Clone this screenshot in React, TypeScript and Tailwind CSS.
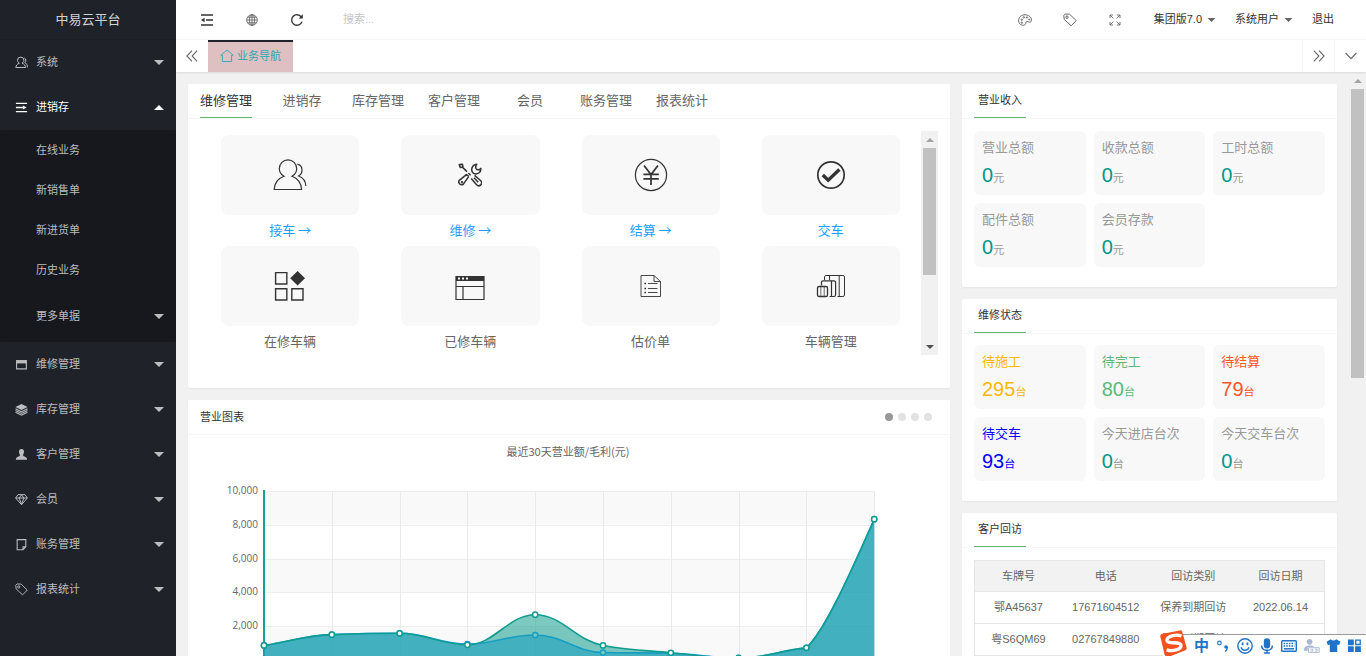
import React, { ReactNode, useState } from 'react';
import clsx from 'clsx';

interface IconProps {
  className?: string;
}

// ---------- Icons ----------

const UsersIcon: React.FC<IconProps> = ({ className }) => (
  <svg viewBox="0 0 34 32" className={className} fill="none" stroke="currentColor" strokeWidth="1.2">
    <path d="M11 17.3C4.5 19.6 1.6 24 1.2 30.5H28.6C28.2 24 25.3 19.6 19 17.3C22 15.6 23.7 12.6 23.7 9.6A8.7 8.7 0 0 0 6.3 9.6C6.3 12.6 8 15.6 11 17.3Z" />
    <path d="M24.4 5.2C27.3 5.8 29 8.2 29 11.2C29 13.8 27.8 15.7 25.6 17C29.8 18.6 32.7 22.2 32.8 27" />
  </svg>
);

const SmallUsersIcon: React.FC<IconProps> = ({ className }) => (
  <svg viewBox="0 0 13 13" className={className} fill="none" stroke="currentColor" strokeWidth="1">
    <path d="M4.4 7.2C2 8 1 9.6.8 11.5H10.6C10.4 9.6 9.4 8 7 7.2C8.4 6.4 8.9 5.4 8.9 4.3A3.2 3.2 0 0 0 2.5 4.3C2.5 5.4 3 6.4 4.4 7.2Z" />
    <path d="M9.4 2C11 2.4 11.4 5.6 9.8 6.6C11.6 7.4 12.4 9 12.4 11.4" />
  </svg>
);

const ToolsIcon: React.FC<IconProps> = ({ className }) => (
  <svg viewBox="0 0 24 24" className={className} fill="none" stroke="currentColor" strokeWidth="1.5" strokeLinejoin="round">
    <path d="M1.2 1.6L4.4 1.2L5 4L2.4 4.6ZM4.6 4.4L9 8.6" />
    <path d="M10.8 13.4L5.2 21.4A3 3 0 0 1 1 17.6L8.4 11.6L10.6 13.2" />
    <path d="M18.8 1.2C17.6 3 17.4 5.2 18.8 6.4C20.2 7.2 21.8 6.6 22.8 5.4C23.4 9.4 19.2 12 15.6 10.4C12.2 8 13.6 1.6 18.8 1.2Z" />
    <path d="M10.4 10L12.6 12.2M13.2 15.6L18.6 21.8A2.9 2.9 0 0 0 22.8 17.8L16.6 12.4M16 14.8L20.2 19.2" />
    <circle cx="4" cy="19.2" r=".5" />
  </svg>
);

const YenIcon: React.FC<IconProps> = ({ className }) => (
  <svg viewBox="0 0 34 34" className={className} fill="none" stroke="currentColor">
    <circle cx="17" cy="17" r="15.6" strokeWidth="1.2" />
    <path d="M10 7.5L17 16.5L24 7.5M17 16.5V27M9.4 16.3H24.8M9.4 20.8H24.8" strokeWidth="1.7" />
  </svg>
);

const CheckIcon: React.FC<IconProps> = ({ className }) => (
  <svg viewBox="0 0 30 30" className={className} fill="none" stroke="currentColor">
    <circle cx="15" cy="15" r="13.2" strokeWidth="1.7" />
    <path d="M6.8 15L12.2 20.2L23.4 9.6" strokeWidth="3.4" />
  </svg>
);

const AppsIcon: React.FC<IconProps> = ({ className }) => (
  <svg viewBox="0 0 32 32" className={className} fill="none" stroke="currentColor" strokeWidth="1.4">
    <path d="M1.6 2.6H12.8V14H1.6ZM1.6 18.8H12.8V30H1.6ZM17.8 18.8H29V30H17.8Z" />
    <path d="M23.6 1L31 8.3L23.6 15.6L16.2 8.3Z" fill="currentColor" stroke="none" />
  </svg>
);

const WindowIcon: React.FC<IconProps> = ({ className }) => (
  <svg viewBox="0 0 30 26" className={className} fill="none" stroke="currentColor" strokeWidth="1.2">
    <path d="M1 1.5H29V24.5H1ZM1 11.5H29M8 11.5V24.5" />
    <path d="M1 1H29V6H1Z" fill="currentColor" stroke="none" />
    <path d="M3 3.5H5M7 3.5H9M11 3.5H13" stroke="#fff" strokeWidth="2" />
  </svg>
);

const FormIcon: React.FC<IconProps> = ({ className }) => (
  <svg viewBox="0 0 22 24" className={className} fill="none" stroke="currentColor" strokeWidth=".9">
    <path d="M1 1.5H14L20.5 7.5V22.5H1ZM14 1.5V7.5H20.5M8 9.5H17.5M8 14.5H17.5M8 18.5H17.5" />
    <path d="M4.4 9.5H6M4.4 14.5H6M4.4 18.5H6" strokeWidth="1.6" />
  </svg>
);

const FleetIcon: React.FC<IconProps> = ({ className }) => (
  <svg viewBox="0 0 30 24" className={className} fill="none" stroke="currentColor" strokeWidth="1">
    <rect x="1.5" y="12.5" width="10" height="10" rx="1.6" strokeWidth="1.3" />
    <path d="M4.8 12.5V22.5M8.2 12.5V22.5" strokeWidth=".7" />
    <path d="M5.5 11.5V8.4A1.6 1.6 0 0 1 7.1 6.8H18A1.6 1.6 0 0 1 19.6 8.4V21A1.6 1.6 0 0 1 18 22.5H13.5M15.5 7V22.5" strokeWidth="1.2" />
    <path d="M8.5 6V2.8A1.6 1.6 0 0 1 10.1 1.5H26.9A1.6 1.6 0 0 1 28.5 2.8V21A1.6 1.6 0 0 1 26.9 22.5H21.5M13.5 1.5V6M23.2 1.5V22.5" />
  </svg>
);

const MenuLinesIcon: React.FC<IconProps> = ({ className }) => (
  <svg viewBox="0 0 14 12" className={className} fill="none" stroke="currentColor" strokeWidth="1.4">
    <path d="M1 1.5H13M1 6H8.5M1 10.5H13" />
    <path d="M8.5 3.8L12.5 6L8.5 8.2Z" fill="currentColor" stroke="none" />
  </svg>
);

const ShrinkIcon: React.FC<IconProps> = ({ className }) => (
  <svg viewBox="0 0 14 12" className={className} fill="none" stroke="currentColor" strokeWidth="1.3">
    <path d="M1 1H13M6 6H13M1 11H13" />
    <path d="M4.6 3.8L1 6L4.6 8.2Z" fill="currentColor" stroke="none" />
  </svg>
);

const GlobeIcon: React.FC<IconProps> = ({ className }) => (
  <svg viewBox="0 0 12 12" className={className} fill="none" stroke="currentColor" strokeWidth=".8">
    <circle cx="6" cy="6" r="5.3" />
    <ellipse cx="6" cy="6" rx="2.6" ry="5.3" />
    <path d="M6 .7V11.3M.7 6H11.3M1.5 3.2H10.5M1.5 8.8H10.5" />
  </svg>
);

const RefreshIcon: React.FC<IconProps> = ({ className }) => (
  <svg viewBox="0 0 14 14" className={className} fill="none" stroke="currentColor" strokeWidth="1.4">
    <path d="M12 8.6A5.3 5.3 0 1 1 11.2 3.8" />
    <path d="M12.8 1V5.4H8.8Z" fill="currentColor" stroke="none" />
  </svg>
);

const PaletteIcon: React.FC<IconProps> = ({ className }) => (
  <svg viewBox="0 0 14 12" className={className} fill="none" stroke="currentColor" strokeWidth="1">
    <path d="M4.2 11.2C1.8 10.6.6 8.8.6 6.6C.6 3.2 3.4.8 7 .8C10.6.8 13.4 3 13.4 6C13.4 8.4 11.8 8.6 10.2 7.8C8.4 7 7.6 8 7.8 9.2C8 10.6 6 11.6 4.2 11.2Z" />
    <circle cx="3.7" cy="5.8" r=".7" />
    <circle cx="5.8" cy="3.4" r=".7" />
    <circle cx="9" cy="3.5" r=".7" />
    <circle cx="3.9" cy="8.7" r=".7" />
    <circle cx="11.2" cy="5.5" r=".5" />
  </svg>
);

const TagIcon: React.FC<IconProps> = ({ className }) => (
  <svg viewBox="0 0 14 14" className={className} fill="none" stroke="currentColor" strokeWidth="1" strokeLinejoin="round">
    <path d="M.8 2.4L2.2 1L6.6 1.2L13.2 7.6L8.2 12.8L1.2 6.4Z" />
    <circle cx="4" cy="4.2" r="1.2" />
  </svg>
);

const ExpandIcon: React.FC<IconProps> = ({ className }) => (
  <svg viewBox="0 0 12 12" className={className} fill="none" stroke="currentColor" strokeWidth=".9">
    <path d="M1 4V1H4M1 1L4.4 4.4M8 1H11V4M11 1L7.6 4.4M1 8V11H4M1 11L4.4 7.6M8 11H11V8M11 11L7.6 7.6" />
  </svg>
);

const HomeIcon: React.FC<IconProps> = ({ className }) => (
  <svg viewBox="0 0 14 14" className={className} fill="none" stroke="currentColor" strokeWidth=".9">
    <path d="M.8 6.2L7 1L13.2 6.2H11.6V12.5H2.4V6.2Z" />
  </svg>
);

const ChevronsLeftIcon: React.FC<IconProps> = ({ className }) => (
  <svg viewBox="0 0 12 12" className={className} fill="none" stroke="currentColor" strokeWidth="1.1">
    <path d="M6 .6L.9 6L6 11.4M11.2 .6L6.1 6L11.2 11.4" />
  </svg>
);

const ChevronDownIcon: React.FC<IconProps> = ({ className }) => (
  <svg viewBox="0 0 12 8" className={className} fill="none" stroke="currentColor" strokeWidth="1.1">
    <path d="M.6 1L6 6.6L11.4 1" />
  </svg>
);

const PanelIcon: React.FC<IconProps> = ({ className }) => (
  <svg viewBox="0 0 12 12" className={className} fill="none" stroke="currentColor" strokeWidth="1">
    <path d="M1.5 2.5H10.5V10H1.5Z" />
    <path d="M1 2H11V5H1Z" fill="currentColor" stroke="none" />
  </svg>
);

const LayersIcon: React.FC<IconProps> = ({ className }) => (
  <svg viewBox="0 0 12 12" className={className} fill="none" stroke="currentColor" strokeWidth="1">
    <path d="M6 1L11.6 3.8L6 6.4L.4 3.8Z" fill="currentColor" stroke="none" />
    <path d="M.5 5.4L6 8L11.5 5.4M.5 7L6 9.6L11.5 7M.5 8.6L6 11.2L11.5 8.6" />
  </svg>
);

const PersonIcon: React.FC<IconProps> = ({ className }) => (
  <svg viewBox="0 0 12 12" className={className} fill="currentColor">
    <path d="M6 1C7.7 1 8.4 2.2 8.3 3.8C8.2 5.2 7.6 5.8 7.4 6.8C7.4 8.2 11.2 8 11.2 10.8H.8C.8 8 4.6 8.2 4.6 6.8C4.4 5.8 3.8 5.2 3.7 3.8C3.6 2.2 4.3 1 6 1Z" />
  </svg>
);

const DiamondIcon: React.FC<IconProps> = ({ className }) => (
  <svg viewBox="0 0 12 12" className={className} fill="none" stroke="currentColor" strokeWidth=".9">
    <path d="M2.8 1.5H9.2L11.4 4.6L6 10.8L.6 4.6ZM.6 4.6H11.4M3.8 4.6L6 10.4L8.2 4.6L6 1.8Z" />
  </svg>
);

const NoteIcon: React.FC<IconProps> = ({ className }) => (
  <svg viewBox="0 0 12 12" className={className} fill="none" stroke="currentColor" strokeWidth="1">
    <path d="M2 1.5H10V8L7.4 10.8H2ZM10 8H7.4V10.8" />
  </svg>
);

const Caret: React.FC<IconProps> = ({ className }) => (
  <svg viewBox="0 0 10 5" className={className} fill="currentColor">
    <path d="M0 0H10L5 5Z" />
  </svg>
);

// ---------- Data ----------

const topMenu = [
  { name: '维修管理', icon: PanelIcon },
  { name: '库存管理', icon: LayersIcon },
  { name: '客户管理', icon: PersonIcon },
  { name: '会员', icon: DiamondIcon },
  { name: '账务管理', icon: NoteIcon },
  { name: '报表统计', icon: TagIcon },
];

const subMenu = ['在线业务', '新销售单', '新进货单', '历史业务'];

const navTabs = ['维修管理', '进销存', '库存管理', '客户管理', '会员', '账务管理', '报表统计'];

const shortcuts = [
  { name: '接车 →', icon: UsersIcon, size: 'w-[34px] h-8', link: true },
  { name: '维修 →', icon: ToolsIcon, size: 'size-6', link: true },
  { name: '结算 →', icon: YenIcon, size: 'size-[34px]', link: true },
  { name: '交车', icon: CheckIcon, size: 'size-[30px]', link: true },
  { name: '在修车辆', icon: AppsIcon, size: 'size-8', link: false },
  { name: '已修车辆', icon: WindowIcon, size: 'w-[30px] h-[26px] mt-1', link: false },
  { name: '估价单', icon: FormIcon, size: 'w-[22px] h-6', link: false },
  { name: '车辆管理', icon: FleetIcon, size: 'w-[30px] h-6', link: false },
];

interface Stat {
  label: string;
  value: number;
  unit: string;
  color?: string;
}

const income: Stat[] = [
  { label: '营业总额', value: 0, unit: '元' },
  { label: '收款总额', value: 0, unit: '元' },
  { label: '工时总额', value: 0, unit: '元' },
  { label: '配件总额', value: 0, unit: '元' },
  { label: '会员存款', value: 0, unit: '元' },
];

const repairStatus: Stat[] = [
  { label: '待施工', value: 295, unit: '台', color: 'text-[#ffb800]' },
  { label: '待完工', value: 80, unit: '台', color: 'text-[#5fb878]' },
  { label: '待结算', value: 79, unit: '台', color: 'text-[#ff5722]' },
  { label: '待交车', value: 93, unit: '台', color: 'text-[#0000ff]' },
  { label: '今天进店台次', value: 0, unit: '台' },
  { label: '今天交车台次', value: 0, unit: '台' },
];

const visits = [
  ['鄂A45637', '17671604512', '保养到期回访', '2022.06.14'],
  ['粤S6QM69', '02767849880', '保养到期回访', '2022.06.14'],
];

const turnover = [860, 1500, 1580, 900, 2680, 860, 430, 120, 720, 8330];
const profit = [860, 1500, 1580, 940, 1480, 440, 400, 110, 720, 8330];

// ---------- Sidebar ----------

interface MenuItemProps {
  name: string;
  icon?: React.FC<IconProps>;
  open?: boolean;
  className?: string;
  onClick?: () => void;
}

const MenuItem: React.FC<MenuItemProps> = ({ name, icon: Icon, open, className = 'h-[45px]', onClick }) => (
  <button
    onClick={onClick}
    className={clsx('flex w-full items-center pr-3 pl-[15px] text-left hover:text-white', open && 'text-white', className)}
  >
    <span className="w-[21px] shrink-0">{Icon && <Icon className="size-[13px]" />}</span>
    <span className="flex-1">{name}</span>
    <Caret className={clsx('h-[5px] w-[10px]', open && 'rotate-180')} />
  </button>
);

const Sidebar = () => {
  const [open, setOpen] = useState(true);
  return (
    <aside className="w-44 shrink-0 bg-[#20222a] text-[#bcbdbf]">
      <div className="flex h-10 items-center justify-center border-b border-[#1d1f26] text-[13px] text-[#d2d3d4]">中易云平台</div>
      <nav>
        <MenuItem name="系统" icon={SmallUsersIcon} />
        <MenuItem name="进销存" icon={MenuLinesIcon} open={open} onClick={() => setOpen(!open)} />
        {open && (
          <div className="rounded-xs bg-[#17181d]">
            {subMenu.map(name => (
              <a key={name} href="#" className="flex h-10 items-center pl-9 hover:text-white">{name}</a>
            ))}
            <MenuItem name="更多单据" className="h-[52px]" />
          </div>
        )}
        {topMenu.map(item => (
          <MenuItem key={item.name} name={item.name} icon={item.icon} />
        ))}
      </nav>
    </aside>
  );
};

// ---------- Header ----------

const IconButton: React.FC<{ title: string; className?: string; children: ReactNode }> = ({ title, className, children }) => (
  <button title={title} aria-label={title} className={clsx('flex items-center justify-center', className)}>
    {children}
  </button>
);

const TopBar = () => (
  <header className="flex h-10 items-center border-b border-[#f6f6f6] bg-white pr-8 pl-2 text-[#333]">
    <IconButton title="侧边伸缩" className="h-full w-[45px]"><ShrinkIcon className="h-3 w-3.5" /></IconButton>
    <IconButton title="前台" className="h-full w-[45px]"><GlobeIcon className="size-3 text-[#555]" /></IconButton>
    <IconButton title="刷新" className="h-full w-[45px]"><RefreshIcon className="size-3.5" /></IconButton>
    <input aria-label="搜索" placeholder="搜索..." className="ml-6 w-40 outline-none placeholder:text-[#c4c4c4]" />
    <div className="ml-auto flex h-full items-center text-[#666]">
      <IconButton title="主题" className="h-full w-[45px]"><PaletteIcon className="h-3 w-3.5" /></IconButton>
      <IconButton title="便签" className="h-full w-[45px]"><TagIcon className="size-3.5" /></IconButton>
      <IconButton title="全屏" className="h-full w-[45px]"><ExpandIcon className="size-3" /></IconButton>
    </div>
    <div className="ml-4 flex items-center gap-[19px] text-[#333]">
      <button className="flex items-center gap-[5px]">集团版7.0<Caret className="h-1 w-[9px] text-[#666]" /></button>
      <button className="flex items-center gap-[5px]">系统用户<Caret className="h-1 w-[9px] text-[#666]" /></button>
      <button>退出</button>
    </div>
  </header>
);

const PageTabs = () => (
  <div className="relative flex h-8 bg-white text-[#666] shadow-[0_1px_2px_rgba(0,0,0,0.1)]">
    <IconButton title="向左" className="w-8"><ChevronsLeftIcon className="size-3" /></IconButton>
    <a href="#" className="flex items-center gap-[3px] border-t-2 border-[#20222a] bg-[#dec0c2] px-3 pb-[2px] text-[#2aa9b3]">
      <HomeIcon className="size-3.5" />
      业务导航
    </a>
    <IconButton title="向右" className="ml-auto w-8 border-l border-[#f3f3f3]"><ChevronsLeftIcon className="size-3 rotate-180" /></IconButton>
    <IconButton title="更多" className="w-8 border-l border-[#f3f3f3]"><ChevronDownIcon className="h-2 w-3" /></IconButton>
  </div>
);

// ---------- Shared pieces ----------

const Card: React.FC<{ header: ReactNode; className?: string; children: ReactNode }> = ({ header, className, children }) => (
  <section className="rounded-xs bg-white shadow-[0_1px_2px_rgba(0,0,0,0.05)]">
    <div className="flex h-[35px] border-b border-[#f6f6f6] px-3">{header}</div>
    <div className={className}>{children}</div>
  </section>
);

const CardTitle: React.FC<{ children: ReactNode }> = ({ children }) => (
  <h2 className="flex h-[34px] w-[52px] items-center justify-center border-b border-[#5fb878] text-[#333]">{children}</h2>
);

const ScrollTrack: React.FC<{ thumb: string; className?: string; end?: boolean }> = ({ thumb, className, end }) => (
  <div className={clsx('flex w-[17px] shrink-0 flex-col items-center bg-[#f1f1f1]', className)}>
    <span className="flex h-[17px] shrink-0 items-center"><Caret className="h-1 w-2 rotate-180 text-[#a3a3a3]" /></span>
    <span className={clsx('w-[13px] bg-[#c1c1c1]', thumb)} />
    {end && <span className="mt-auto flex h-[17px] items-center"><Caret className="h-1 w-2 text-[#505050]" /></span>}
  </div>
);

const StatGrid: React.FC<{ stats: Stat[] }> = ({ stats }) => (
  <div className="grid grid-cols-3 gap-2">
    {stats.map(s => (
      <a key={s.label} href="#" className={clsx('block h-16 rounded-md bg-[#f8f8f8] px-2 pt-2', s.color || 'text-[#999]')}>
        <h3 className="text-[13px] leading-[18px]">{s.label}</h3>
        <p className="mt-1 leading-7">
          <span className={clsx('text-[20px]', !s.color && 'text-[#009688]')}>{s.value}</span>
          {s.unit}
        </p>
      </a>
    ))}
  </div>
);

// ---------- Dashboard cards ----------

const ShortcutCard = () => {
  const [active, setActive] = useState(0);
  const tabs = navTabs.map((name, i) => (
    <button
      key={name}
      onClick={() => setActive(i)}
      className={clsx('mr-6 h-[34px] min-w-[52px] text-[13px]', i === active ? 'border-b border-[#5fb878] text-[#333]' : 'text-[#666]')}
    >
      {name}
    </button>
  ));
  return (
    <Card header={tabs} className="px-3 pt-3 pb-[33px]">
      <div className="flex h-56">
        <div className="grid flex-1 grid-cols-4 content-start pt-1">
          {shortcuts.map(({ name, icon: Icon, size, link }) => (
            <a key={name} href="#" className="block px-[21px]">
              <span className="flex h-20 items-center justify-center rounded-lg bg-[#f8f8f8] text-[#333]">
                <Icon className={size} />
              </span>
              <span
                className={clsx(
                  "block h-[31px] text-center font-['Noto_Sans_CJK_SC',sans-serif] text-[13px] leading-[30px]",
                  link ? 'text-[#1e9fff]' : 'text-[#666]'
                )}
              >
                {name}
              </span>
            </a>
          ))}
        </div>
        <ScrollTrack thumb="h-[127px]" end />
      </div>
    </Card>
  );
};

const CHART = { left: 64, top: 56, step: 67.8, height: 169 };

const toPoint = (value: number, i: number) => [CHART.left + i * CHART.step, CHART.top + CHART.height * (1 - value / 10000)];

// Monotone-ish smoothing: tangents go flat at peaks and valleys
const smoothPath = (values: number[]) => {
  const pts = values.map(toPoint);
  const slope = pts.map((p, i) => {
    if (i === 0) return (pts[1][1] - p[1]) / CHART.step;
    if (i === pts.length - 1) return ((p[1] - pts[i - 1][1]) / CHART.step) * 1.2;
    const a = p[1] - pts[i - 1][1];
    const b = pts[i + 1][1] - p[1];
    return a * b <= 0 ? 0 : (2 * a * b) / (a + b) / CHART.step;
  });
  // the last climb leaves its point steeply
  slope[8] = -0.9;
  return pts.reduce((d, [x, y], i) => {
    if (i === 0) return `M${x} ${y}`;
    const [px, py] = pts[i - 1];
    const out = CHART.step * (i === 9 ? 0.25 : 0.4);
    const back = CHART.step * 0.4;
    const backSlope = i === 8 ? -0.1 : slope[i];
    return `${d}C${px + out} ${py + slope[i - 1] * out} ${x - back} ${y - backSlope * back} ${x} ${y}`;
  }, '');
};

const Series: React.FC<{ values: number[]; color: string; fill: string }> = ({ values, color, fill }) => {
  const line = smoothPath(values);
  const bottom = CHART.top + CHART.height;
  return (
    <g>
      <path d={`${line}V${bottom}H${CHART.left}Z`} fill={fill} fillOpacity=".55" />
      <path d={line} fill="none" stroke={color} strokeWidth="1.6" />
      {values.map(toPoint).map(([x, y]) => (
        <circle key={x} cx={x} cy={y} r="2.6" fill="#fff" stroke={color} strokeWidth="1.5" />
      ))}
    </g>
  );
};

const ChartCard = () => {
  const [slide, setSlide] = useState(0);
  const right = CHART.left + CHART.step * 9;
  const header = (
    <>
      <h2 className="self-center text-[#333]">营业图表</h2>
      <div className="mr-[6px] ml-auto flex items-center gap-[5px]">
        {[0, 1, 2, 3].map(i => (
          <button
            key={i}
            aria-label={`第${i + 1}张`}
            onClick={() => setSlide(i)}
            className={clsx('size-2 rounded-full', i === slide ? 'bg-[#999]' : 'bg-[#e2e2e2]')}
          />
        ))}
      </div>
    </>
  );
  return (
    <Card header={header} className="px-3">
      <svg viewBox="0 0 738 265" className="w-full" role="img">
        <text x="368" y="21" textAnchor="middle" fill="#666" className="font-['Noto_Sans_CJK_SC',sans-serif] text-[11px]">最近30天营业额/毛利(元)</text>
        {[0, 1, 2, 3, 4].map(i => {
          const y = CHART.top + i * 33.8;
          return (
            <g key={i}>
              <rect x={CHART.left} y={y} width={right - CHART.left} height="33.8" fill={i % 2 ? '#fff' : '#f9f9f9'} />
              <path d={`M${CHART.left} ${Math.round(y) + 0.5}H${right}`} stroke="#eee" />
              <text x="58" y={y + 3} textAnchor="end" fill="#666" className="font-['Open_Sans',sans-serif] text-[10px]">
                {(10000 - i * 2000).toLocaleString('en-US')}
              </text>
            </g>
          );
        })}
        {turnover.map((_, i) => (
          <path key={i} d={`M${Math.round(CHART.left + i * CHART.step) + 0.5} ${CHART.top}V${CHART.top + CHART.height}`} stroke="#eaeaea" />
        ))}
        <path d={`M${CHART.left} ${CHART.top - 1}V${CHART.top + CHART.height}`} stroke="#1a9f92" strokeWidth="2" />
        <Series values={profit} color="#1e9fff" fill="#1e9fff" />
        <Series values={turnover} color="#109c8e" fill="#109c8e" />
      </svg>
    </Card>
  );
};

const VisitCard = () => (
  <Card header={<CardTitle>客户回访</CardTitle>} className="p-3">
    <table className="w-full table-fixed border border-[#e6e6e6] text-center text-[#666]">
      <thead>
        <tr className="h-[31px] border-b border-[#e6e6e6] bg-[#f2f2f2]">
          {['车牌号', '电话', '回访类别', '回访日期'].map(h => (
            <th key={h} className="font-normal">{h}</th>
          ))}
        </tr>
      </thead>
      <tbody>
        {visits.map(row => (
          <tr key={row[0]} className="h-8 border-b border-[#e6e6e6]">
            {row.map(cell => (
              <td key={cell} className="whitespace-nowrap">{cell}</td>
            ))}
          </tr>
        ))}
      </tbody>
    </table>
  </Card>
);

// Input method bar docked over the bottom right corner
const ImeBar = () => (
  <div className="fixed right-0 bottom-0 flex h-[22px] items-center gap-[6px] border-t border-[#999] bg-white pr-1 pl-[31px] text-[#1f74c9]">
    <svg viewBox="0 0 28 26" className="absolute bottom-0 -left-1 h-[26px] w-7">
      <path d="M1.4 6.5Q.8 4.6 2.8 4L20.6 .4Q22.4 0 23.2 1.8L27.6 17.4Q28.2 19.2 26.4 20.2L12 26H6.6Q5.8 25.6 5.4 24Z" fill="#f4511e" />
      <path d="M22.5 6C17 3.8 7.4 6.4 8 10.6C8.8 14.6 21.4 11 22 15.2C22.4 19.8 13.4 21.8 7.6 19.8" fill="none" stroke="#fff" strokeWidth="3.4" />
    </svg>
    <span className="text-[15px] leading-none font-bold">中</span>
    <svg viewBox="0 0 16 16" className="size-4" fill="none" stroke="currentColor" strokeWidth="1.2">
      <circle cx="4.4" cy="5" r="1.8" />
      <circle cx="11" cy="9" r="1.8" fill="currentColor" stroke="none" />
      <path d="M12.3 9Q12.5 12 10 13.4" />
    </svg>
    <svg viewBox="0 0 16 16" className="size-4" fill="none" stroke="currentColor" strokeWidth="1.4">
      <circle cx="8" cy="8" r="7.2" />
      <path d="M4 9.2Q5 12.2 8 12.2T12 9.2" />
      <path d="M5.6 4.6V7.2M10.4 4.6V7.2" strokeWidth="1.8" />
    </svg>
    <svg viewBox="0 0 16 16" className="size-4" fill="none" stroke="currentColor" strokeWidth="1.6">
      <rect x="5.6" y="1" width="4.8" height="8.6" rx="2.4" fill="currentColor" />
      <path d="M2.6 7.4C2.6 14 13.4 14 13.4 7.4M8 12.4V15M5 15H11" />
    </svg>
    <svg viewBox="0 0 16 16" className="size-4" fill="none" stroke="currentColor" strokeWidth="1.4">
      <rect x=".7" y="2.7" width="14.6" height="10.6" rx=".8" />
      <path d="M2.6 5.4H13.4M2.6 8H13.4" strokeDasharray="1.6 1" strokeWidth="1.5" />
      <path d="M3 10.8H13" strokeWidth="1.5" />
    </svg>
    <svg viewBox="0 0 18 16" className="h-4 w-[17px] text-[#aab8d2]" fill="currentColor">
      <circle cx="7" cy="3.6" r="3" />
      <path d="M1 13C1 9 3 7.4 7 7.4C10 7.4 11.4 8 12 9H5V13Z" />
      <path d="M5.8 9.8H17.2V14.8H5.8ZM8 11.4H10.4V13.4H8M12.6 11.4H15V13.4H12.6" fill="none" stroke="currentColor" />
    </svg>
    <svg viewBox="0 0 16 16" className="size-[15px]" fill="currentColor">
      <path d="M5 1.4Q8 4 11 1.4L15.4 4L14 7.6L12 7V15H4V7L2 7.6L.6 4Z" />
    </svg>
    <svg viewBox="0 0 16 16" className="size-[15px]" fill="currentColor">
      <path d="M1 1.6H7.2V7.6H1ZM1 8.8H7.2V14.8H1ZM8.6 8.8H14.8V14.8H8.6Z" />
      <path d="M9.3 2.3H14.1V6.9H9.3Z" fill="none" stroke="currentColor" strokeWidth="1.4" />
    </svg>
  </div>
);

export default function App() {
  return (
    <div className="flex h-screen w-full overflow-hidden bg-[#f1f1f1] font-['Liberation_Sans','Noto_Sans_CJK_SC',sans-serif] text-[11px]">
      <Sidebar />
      <div className="flex min-w-0 flex-1 flex-col">
        <TopBar />
        <PageTabs />
        <div className="flex min-h-0 flex-1">
          <main className="grid min-w-0 flex-1 grid-cols-3 content-start items-start gap-3 overflow-hidden p-3">
            <div className="col-span-2 flex flex-col gap-3">
              <ShortcutCard />
              <ChartCard />
            </div>
            <div className="flex flex-col gap-3">
              <Card header={<CardTitle>营业收入</CardTitle>} className="px-3 pt-3 pb-5">
                <StatGrid stats={income} />
              </Card>
              <Card header={<CardTitle>维修状态</CardTitle>} className="px-3 pt-[11px] pb-5">
                <StatGrid stats={repairStatus} />
              </Card>
              <VisitCard />
            </div>
          </main>
          <ScrollTrack thumb="h-[289px]" />
        </div>
      </div>
      <ImeBar />
    </div>
  );
}
